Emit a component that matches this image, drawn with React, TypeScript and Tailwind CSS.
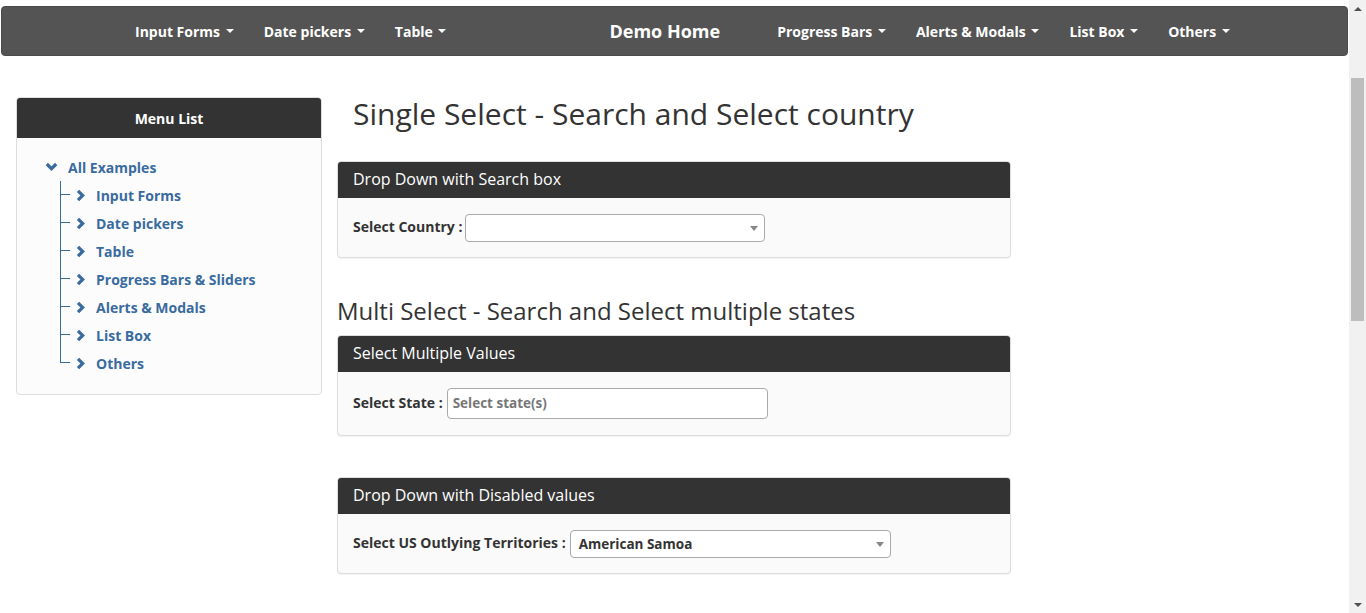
import React from "react";

const font = { fontFamily: '"Open Sans", "Liberation Sans", sans-serif' };

function Caret() {
  return (
    <span className="inline-block ml-[5.7px] w-0 h-0 border-t-[4px] border-t-white border-x-[4px] border-x-transparent align-middle" />
  );
}

function NavItem({ label }: { label: string }) {
  return (
    <div className="px-[15px] flex items-center text-white font-bold text-[14px] whitespace-nowrap">
      {label}
      <Caret />
    </div>
  );
}

function ChevronDown() {
  return (
    <svg width="13" height="10" viewBox="0 0 13 10" className="shrink-0">
      <polyline points="1.8,2 6.5,6.7 11.2,2" fill="none" stroke="#3a6b9f" strokeWidth="3.2" />
    </svg>
  );
}

function ChevronRight() {
  return (
    <svg width="9" height="13" viewBox="0 0 9 13" className="shrink-0">
      <polyline points="2,1.8 6.7,6.5 2,11.2" fill="none" stroke="#3a6b9f" strokeWidth="3.2" />
    </svg>
  );
}

function SelectArrow() {
  return (
    <span className="w-0 h-0 border-t-[5px] border-t-[#888] border-x-[4px] border-x-transparent" />
  );
}

const children = [
  "Input Forms",
  "Date pickers",
  "Table",
  "Progress Bars & Sliders",
  "Alerts & Modals",
  "List Box",
  "Others",
];

function Panel({ title, children, bodyClass }: { title: string; children: React.ReactNode; bodyClass: string }) {
  return (
    <div className="w-[674px] border border-[#ddd] rounded-[4px] bg-[#fafafa] shadow-[0_1px_1px_rgba(0,0,0,0.05)] overflow-hidden">
      <div className="h-[36px] bg-[#333] text-white text-[16px] flex items-center pl-[15px] pb-[3px]">{title}</div>
      <div className={"flex items-start pl-[15px] pt-[16px] " + bodyClass}>{children}</div>
    </div>
  );
}

export default function App() {
  return (
    <div className="h-[613px] w-[1366px] overflow-hidden flex bg-white text-[#333]" style={font}>
      <div className="flex-1 flex flex-col">
        {/* Navbar */}
        <div className="mt-[6px] ml-[1px] mr-[1px] h-[50px] bg-[#545454] border border-[#4a4a4a] rounded-[4px] flex items-center">
          <div className="flex h-full pl-[118px]">
            <NavItem label="Input Forms" />
            <NavItem label="Date pickers" />
            <NavItem label="Table" />
          </div>
          <div className="ml-[148px] text-white font-bold text-[18px] whitespace-nowrap">Demo Home</div>
          <div className="flex h-full ml-[42px]">
            <NavItem label="Progress Bars" />
            <NavItem label="Alerts & Modals" />
            <NavItem label="List Box" />
            <NavItem label="Others" />
          </div>
        </div>

        <div className="flex pt-[41px]">
          {/* Sidebar */}
          <div className="ml-[16px] w-[306px] h-[298px] border border-[#ddd] rounded-[4px] bg-[#fcfcfc] overflow-hidden self-start">
            <div className="h-[40px] bg-[#333] text-white font-bold text-[14px] flex items-center justify-center">Menu List</div>
            <div className="pt-[15px] pl-[28px] text-[#3a6b9f] font-bold text-[14px]">
              <div className="h-[28px] flex items-center">
                <ChevronDown />
                <span className="ml-[10px]">All Examples</span>
              </div>
              <div className="ml-[15px]">
                {children.map((c, i) => {
                  const last = i === children.length - 1;
                  return (
                    <div key={c} className="h-[28px] flex items-center">
                      <div className="w-[10px] h-[28px] flex flex-col">
                        <div className="h-[14px] border-l border-b border-[#3a6b9f]" />
                        <div className={"h-[14px] " + (last ? "" : "border-l border-[#3a6b9f]")} />
                      </div>
                      <div className="ml-[6px]">
                        <ChevronRight />
                      </div>
                      <span className="ml-[11px]">{c}</span>
                    </div>
                  );
                })}
              </div>
            </div>
          </div>

          {/* Main */}
          <div className="ml-[15px] flex flex-col">
            <h1 className="pl-[16px] h-[34px] leading-[34px] text-[30px] font-normal text-[#333] whitespace-nowrap">
              Single Select - Search and Select country
            </h1>
            <div className="mt-[30px]">
              <Panel title="Drop Down with Search box" bodyClass="h-[59px]">
                <span className="font-bold text-[14px] h-[28px] leading-[26px]">Select Country :</span>
                <div className="ml-[3px] w-[300px] h-[28px] bg-white border border-[#aaa] rounded-[4px] flex items-center justify-end pr-[6px]">
                  <SelectArrow />
                </div>
              </Panel>
            </div>
            <h2 className="mt-[39px] h-[28px] leading-[28px] text-[24px] font-normal text-[#333] whitespace-nowrap">
              Multi Select - Search and Select multiple states
            </h2>
            <div className="mt-[10px]">
              <Panel title="Select Multiple Values" bodyClass="h-[63px]">
                <span className="font-bold text-[14px] h-[31px] leading-[29px]">Select State :</span>
                <div className="ml-[4px] w-[321px] h-[31px] bg-white border border-[#aaa] rounded-[4px] flex items-center pl-[5px] text-[13.5px] font-bold text-[#777]">
                  Select state(s)
                </div>
              </Panel>
            </div>
            <div className="mt-[41px]">
              <Panel title="Drop Down with Disabled values" bodyClass="h-[59px]">
                <span className="font-bold text-[14px] h-[28px] leading-[26px]">Select US Outlying Territories :</span>
                <div className="ml-[4px] w-[321px] h-[28px] bg-white border border-[#aaa] rounded-[4px] flex items-center justify-between pl-[8px] pr-[6px] pt-[1px] text-[13.5px] font-bold text-[#333]">
                  <span>American Samoa</span>
                  <SelectArrow />
                </div>
              </Panel>
            </div>
          </div>
        </div>
      </div>

      {/* Scrollbar */}
      <div className="w-[17px] h-full bg-[#f1f1f1] flex flex-col items-center">
        <div className="h-[17px] flex items-center justify-center">
          <span className="w-0 h-0 border-b-[4px] border-b-[#505050] border-x-[4px] border-x-transparent" />
        </div>
        <div className="mt-[61px] w-[13px] h-[243px] bg-[#bdbdbd]" />
        <div className="flex-1" />
        <div className="h-[17px] flex items-center justify-center">
          <span className="w-0 h-0 border-t-[4px] border-t-[#505050] border-x-[4px] border-x-transparent" />
        </div>
      </div>
    </div>
  );
}
